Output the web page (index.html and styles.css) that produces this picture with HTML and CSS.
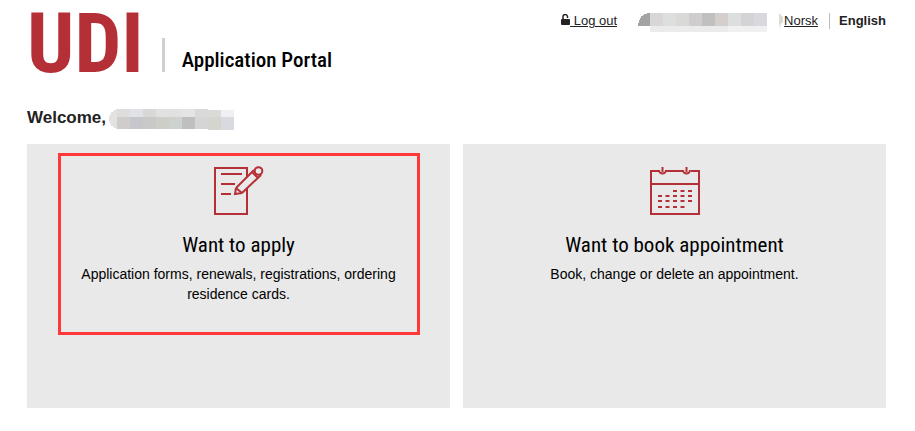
FILE: index.html
```html
<!DOCTYPE html>
<html lang="en">
<head>
  <meta charset="UTF-8" />
  <meta name="viewport" content="width=device-width, initial-scale=1.0"/>
  <title>UDI Application Portal</title>
  <link rel="stylesheet" href="styles.css">
</head>
<body>

  <header class="header">
    <div class="brand">
      <a class="logo" href="#">UDI</a>
      <span class="portal-name">Application Portal</span>
    </div>
    <nav class="user-menu">
      <a class="logout" href="#">
        <svg class="lock" viewBox="0 0 9 11" aria-hidden="true">
          <path d="M2 6V3a2 2 0 0 1 4.5-.5V4" fill="none" stroke="#222" stroke-width="1.5"/>
          <rect x="0" y="5" width="9" height="6" rx="1" fill="#222"/>
        </svg><span class="link-text">&nbsp;Log out</span>
      </a>
      <svg class="hidden-user" viewBox="0 0 129 19" shape-rendering="crispEdges" aria-hidden="true">
        <path d="M0 13C0 5 5 0 12 0V13Z" fill="#a3a3a3"/>
        <rect x="12" y="0" width="13" height="13" fill="#d8d6d6"/>
        <rect x="25" y="0" width="13" height="13" fill="#dddfde"/>
        <rect x="38" y="0" width="13" height="13" fill="#d9d9d8"/>
        <rect x="51" y="0" width="13" height="13" fill="#cfcdce"/>
        <rect x="64" y="0" width="13" height="13" fill="#c1c0c0"/>
        <rect x="77" y="0" width="13" height="13" fill="#d4cfcc"/>
        <rect x="90" y="0" width="13" height="13" fill="#dcdfde"/>
        <rect x="103" y="0" width="13" height="13" fill="#d4d3d6"/>
        <rect x="116" y="0" width="13" height="13" fill="#d9d8de"/>
        <rect x="12" y="13" width="78" height="6" fill="#ebebeb"/>
        <rect x="90" y="13" width="39" height="6" fill="#f0f0f0"/>
      </svg>
      <div class="languages">
        <svg class="hidden-edge" viewBox="0 0 5 16" aria-hidden="true">
          <path d="M0 0L4 4V9L0 13Z" fill="#dedad6"/>
          <path d="M0 13L2 12V14L0 16Z" fill="#f0f0f0"/>
        </svg>
        <a class="link-text" href="#">Norsk</a>
        <span class="current">English</span>
      </div>
    </nav>
  </header>

  <main>
    <h1 class="welcome">Welcome,
      <svg class="hidden-name" viewBox="0 0 125 21" shape-rendering="crispEdges" aria-hidden="true">
        <path d="M8 0C-3 4-3 16 8 20Z" fill="#e2e2e3"/>
        <rect x="8" y="0" width="13" height="8" fill="#dedddb"/>
        <rect x="21" y="0" width="13" height="8" fill="#e1e2e5"/>
        <rect x="34" y="0" width="13" height="8" fill="#d8d8d7"/>
        <rect x="47" y="0" width="26" height="8" fill="#e1e1e2"/>
        <rect x="73" y="0" width="13" height="8" fill="#e4e4e4"/>
        <rect x="86" y="0" width="13" height="8" fill="#d9d9da"/>
        <rect x="99" y="1" width="13" height="7" fill="#dadbd7"/>
        <rect x="112" y="1" width="13" height="7" fill="#f0f0f2"/>
        <rect x="8" y="8" width="13" height="12" fill="#cfcccb"/>
        <rect x="21" y="8" width="13" height="12" fill="#c6c7cc"/>
        <rect x="34" y="8" width="13" height="12" fill="#cac9c9"/>
        <rect x="47" y="8" width="13" height="12" fill="#cdcec8"/>
        <rect x="60" y="8" width="13" height="12" fill="#cdd1d0"/>
        <rect x="73" y="8" width="13" height="12" fill="#bfbfbf"/>
        <rect x="86" y="8" width="13" height="12" fill="#d5d5d6"/>
        <rect x="99" y="8" width="13" height="13" fill="#d5d5cf"/>
        <rect x="112" y="8" width="13" height="13" fill="#d9dadf"/>
      </svg>
    </h1>

    <div class="cards">
      <a class="card highlighted" href="#">
        <svg class="icon" viewBox="0 0 50 50" fill="none" stroke="#b52f36" stroke-width="2" aria-hidden="true">
          <path d="M33 11V2H1V48H33V22M7 8H28M7 18H21M7 28H17"/>
          <path d="M22 22L40 4M28 27L47 9M22 22L21 28L28 27M22 22L28 27M38 6L44 12"/>
          <circle cx="44.500" cy="5" r="3.800"/>
        </svg>
        <h2>Want to apply</h2>
        <p>Application forms, renewals, registrations, ordering residence cards.</p>
      </a>
      <a class="card" href="#">
        <svg class="icon" viewBox="0 0 50 50" fill="none" stroke="#b52f36" stroke-width="2" aria-hidden="true">
          <path d="M9 5H1V48H49V5H41M16 5H33M1 18H49"/>
          <path d="M9 4A3.5 3.5 0 0 0 16 4M33 4A3.5 3.5 0 0 0 40 4M12.5 1V6M36.5 1V6"/>
          <path d="M23 25H42M8 30H42M8 35H42M8 41H35" stroke-dasharray="4 3.5"/>
        </svg>
        <h2>Want to book appointment</h2>
        <p>Book, change or delete an appointment.</p>
      </a>
    </div>
  </main>

</body>
</html>
```

FILE: styles.css
```css
* {
  box-sizing: border-box;
}

body {
  margin: 0;
  padding: 13px 29px 23px 27px;
  background: #fff;
  color: #222;
  font-family: "Liberation Sans", Arial, sans-serif;
  font-size: 14px;
}

a {
  color: inherit;
  text-decoration: none;
}

.header {
  display: flex;
  justify-content: space-between;
  align-items: flex-start;
}

.brand {
  display: flex;
  align-items: flex-end;
}

.logo {
  color: #b52f36;
  font-family: "Roboto Condensed", "Liberation Sans Narrow", sans-serif;
  font-size: 83px;
  font-weight: bold;
  line-height: 62px;
}

.portal-name {
  margin: 0 0 3px 18px;
  padding: 10px 0 0 17px;
  border-left: 3px solid #d0d0d0;
  color: #000;
  font-family: "Roboto Condensed", "Liberation Sans Narrow", sans-serif;
  font-size: 21px;
  font-weight: 500;
  line-height: 24px;
}

.user-menu {
  display: flex;
  font-size: 13px;
  line-height: 16px;
}

.link-text {
  text-decoration: underline;
}

.lock {
  width: 9px;
  height: 11px;
}

.hidden-user {
  width: 129px;
  height: 19px;
  margin: 0 12px 0 21px;
}

.languages {
  display: flex;
  align-items: flex-start;
}

.hidden-edge {
  width: 5px;
  height: 16px;
}

.current {
  margin-left: 11px;
  padding-left: 9px;
  border-left: 1px solid #bbb;
  font-weight: bold;
}

.welcome {
  display: flex;
  gap: 3px;
  margin: 34px 0 14px;
  font-size: 17px;
  line-height: 18px;
}

.hidden-name {
  width: 125px;
  height: 21px;
}

.cards {
  display: grid;
  grid-template-columns: 1fr 1fr;
  gap: 13px;
}

.card {
  position: relative;
  min-height: 264px;
  padding: 22px 48px;
  background: #e9e9e9;
  color: #000;
  text-align: center;
}

/* red frame over the card */
.highlighted::after {
  content: "";
  position: absolute;
  top: 9px;
  right: 30px;
  bottom: 73px;
  left: 31px;
  border: 3px solid #ff3838;
}

.icon {
  display: block;
  width: 50px;
  height: 50px;
  margin: 0 auto;
}

.card h2 {
  margin: 17px 0 7px;
  font-family: "Roboto Condensed", "Liberation Sans Narrow", sans-serif;
  font-size: 21px;
  font-weight: 400;
  line-height: 24px;
}

.card p {
  margin: 0;
  line-height: 20px;
}
```
